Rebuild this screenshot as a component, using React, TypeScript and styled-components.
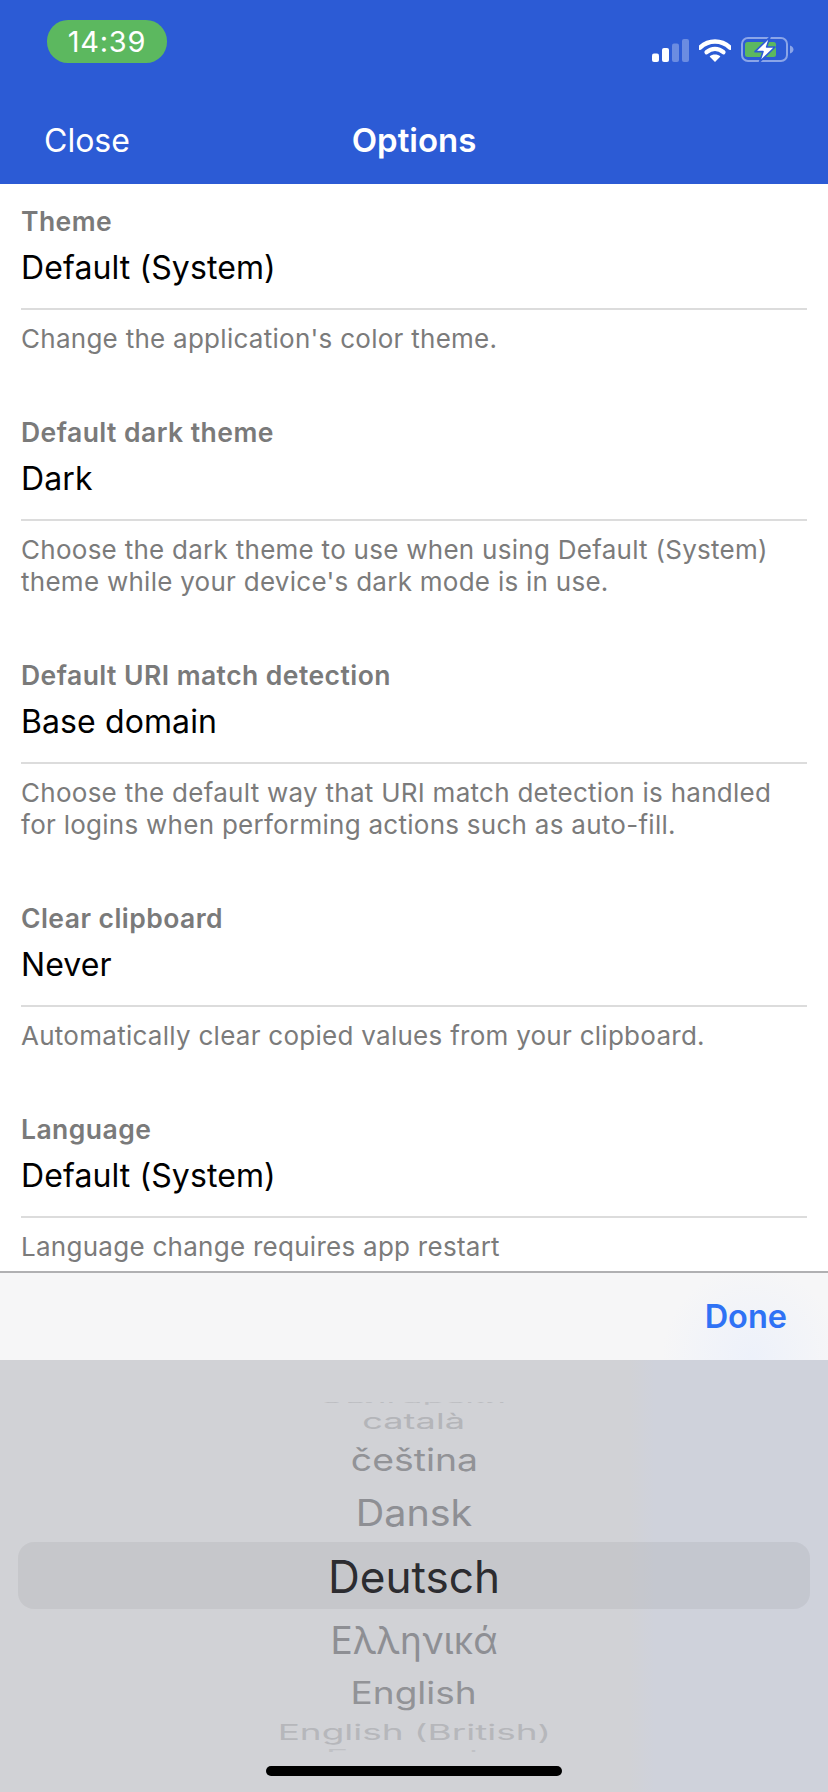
import React from 'react';
import styled, { createGlobalStyle } from 'styled-components';

const Global = createGlobalStyle`
  html, body {
    margin: 0;
    padding: 0;
    background: #fff;
  }
  body {
    font-family: 'Inter', 'Liberation Sans', sans-serif;
    -webkit-font-smoothing: antialiased;
  }
`;

const Screen = styled.div`
  width: 828px;
  height: 1792px;
  display: flex;
  flex-direction: column;
  overflow: hidden;
  background: #fff;
`;

// 상단 헤더
const Header = styled.header`
  flex: none;
  height: 184px;
  background: #2c5bd5;
  color: #fff;
  padding-top: 20px;
  box-sizing: border-box;
`;

const StatusBar = styled.div`
  height: 43px;
  display: flex;
  justify-content: space-between;
  align-items: flex-end;
  padding: 0 34px 0 47px;
`;

const TimePill = styled.div`
  width: 120px;
  height: 43px;
  border-radius: 21px;
  background: #5cb85f;
  display: flex;
  align-items: center;
  justify-content: center;
  font-size: 29px;
  letter-spacing: 0.7px;
  line-height: 43px;
`;

const StatusIcons = styled.div`
  display: flex;
  align-items: flex-end;
  margin-bottom: 1px;
`;

const Nav = styled.div`
  margin-top: 33px;
  height: 88px;
  display: grid;
  grid-template-columns: 1fr auto 1fr;
  align-items: center;
  padding: 0 44px;
`;

const NavButton = styled.span`
  font-size: 32px;
`;

const NavTitle = styled.span`
  font-size: 33px;
  font-weight: 600;
`;

// 옵션 목록
const List = styled.main`
  flex: 1;
  min-height: 0;
  overflow: hidden;
  padding-top: 22px;
`;

const Section = styled.section`
  padding: 0 21px;
  margin-bottom: 62px;
`;

const Label = styled.div`
  font-size: 26.5px;
  letter-spacing: 0.45px;
  line-height: 30px;
  font-weight: 600;
  color: #7a7a7a;
`;

const Value = styled.div`
  margin-top: 12px;
  font-size: 32px;
  letter-spacing: 0.1px;
  line-height: 40px;
  color: #000;
  padding-bottom: 20px;
  border-bottom: 2px solid #dcdcdc;
`;

const Hint = styled.p`
  margin: 13px 0 0;
  font-size: 26px;
  letter-spacing: 0.27px;
  line-height: 32px;
  color: #7b7b7b;
  white-space: pre-line;
`;

// 하단 피커
const Sheet = styled.div`
  flex: none;
  height: 521px;
  display: flex;
  flex-direction: column;
`;

const Toolbar = styled.div`
  flex: none;
  height: 89px;
  box-sizing: border-box;
  border-top: 2px solid #b0b0b2;
  background: radial-gradient(circle at 752px 84px, #edf1fa 0, #f6f6f7 90px);
  display: flex;
  align-items: center;
  justify-content: flex-end;
  padding-right: 41px;
`;

const DoneButton = styled.span`
  font-size: 32.5px;
  font-weight: 600;
  color: #2f72f5;
`;

const Picker = styled.div`
  position: relative;
  flex: 1;
  background: linear-gradient(90deg, #d1d2d6 0%, #d1d2d6 76%, #cfd2db 79%, #cfd2db 100%);
`;

const SelectionBar = styled.div`
  position: absolute;
  left: 18px;
  right: 18px;
  top: 182px;
  height: 67px;
  border-radius: 16px;
  background: rgba(0, 0, 0, 0.05);
`;

const Wheel = styled.div`
  position: absolute;
  left: 0;
  right: 0;
  top: 42px;
  height: 350px;
  overflow: hidden;
`;

const WheelTrack = styled.div`
  margin-top: -10px;
`;

const WheelRow = styled.div<{ $h: number }>`
  height: ${({ $h }) => $h}px;
  display: flex;
  align-items: center;
  justify-content: center;
`;

const WheelText = styled.span<{ $sx: number; $sy: number; $color: string }>`
  font-size: 42px;
  line-height: 50px;
  white-space: nowrap;
  color: ${({ $color }) => $color};
  transform: scale(${({ $sx }) => $sx}, ${({ $sy }) => $sy});
`;

const HomeIndicator = styled.div`
  position: absolute;
  left: 266px;
  top: 406px;
  width: 296px;
  height: 10px;
  border-radius: 5px;
  background: #000;
`;

const SignalIcon = () => (
  <svg width="37" height="23" viewBox="0 0 37 23" style={{ marginRight: 10 }}>
    <rect x="0" y="14.5" width="7" height="8.5" rx="2" fill="#fff" />
    <rect x="10" y="9" width="7" height="14" rx="2" fill="#fff" />
    <rect x="20" y="4.5" width="7" height="18.5" rx="2" fill="#fff" opacity="0.3" />
    <rect x="30" y="0" width="7" height="23" rx="2" fill="#fff" opacity="0.3" />
  </svg>
);

const WifiIcon = () => (
  <svg width="32" height="23" viewBox="0 0 32 23" style={{ marginRight: 10 }}>
    <path d="M1 8.2 C9.5 0 22.5 0 31 8.2" fill="none" stroke="#fff" strokeWidth="4.6" strokeLinecap="round" transform="translate(0 0.4)" />
    <path d="M7.6 13.2 C12.6 8.8 19.4 8.8 24.4 13.2" fill="none" stroke="#fff" strokeWidth="4.4" strokeLinecap="round" />
    <path d="M16 23 L10.6 17.4 C13.6 14.9 18.4 14.9 21.4 17.4 Z" fill="#fff" />
  </svg>
);

const BatteryIcon = () => (
  <svg width="53" height="25" viewBox="0 0 53 25">
    <rect x="1" y="1" width="45" height="23" rx="6" fill="none" stroke="#fff" strokeOpacity="0.45" strokeWidth="2" />
    <rect x="4" y="5" width="31" height="15" rx="2.5" fill="#5cb85f" />
    <path d="M49 8.5 C51.5 9.5 52.5 11 52.5 12.5 C52.5 14 51.5 15.5 49 16.5 Z" fill="#fff" fillOpacity="0.45" />
    <path
      d="M29 0 L14 14.6 L22 14.6 L18.5 25 L34 10 L25.6 10 Z"
      fill="#fff"
      stroke="#2c5bd5"
      strokeWidth="1.6"
      strokeLinejoin="round"
    />
  </svg>
);

const options = [
  {
    label: 'Theme',
    value: 'Default (System)',
    hint: "Change the application's color theme.",
  },
  {
    label: 'Default dark theme',
    value: 'Dark',
    hint: "Choose the dark theme to use when using Default (System)\ntheme while your device's dark mode is in use.",
  },
  {
    label: 'Default URI match detection',
    value: 'Base domain',
    hint: 'Choose the default way that URI match detection is handled\nfor logins when performing actions such as auto-fill.',
  },
  {
    label: 'Clear clipboard',
    value: 'Never',
    hint: 'Automatically clear copied values from your clipboard.',
  },
  {
    label: 'Language',
    value: 'Default (System)',
    hint: 'Language change requires app restart',
  },
];

const languages = [
  { name: 'български', h: 16, sx: 0.86, sy: 0.2, color: '#bcbdc1' },
  { name: 'català', h: 26, sx: 0.86, sy: 0.5, color: '#b4b5b9' },
  { name: 'čeština', h: 52, sx: 0.89, sy: 0.74, color: '#929397' },
  { name: 'Dansk', h: 54, sx: 0.94, sy: 0.88, color: '#8e8f94' },
  { name: 'Deutsch', h: 74, sx: 1.05, sy: 1.06, color: '#2c2c30' },
  { name: 'Ελληνικά', h: 52, sx: 0.88, sy: 0.9, color: '#8e8f94' },
  { name: 'English', h: 54, sx: 0.88, sy: 0.73, color: '#929397' },
  { name: 'English (British)', h: 24, sx: 0.88, sy: 0.5, color: '#b6b7bb' },
  { name: 'Esperanto', h: 22, sx: 0.88, sy: 0.35, color: '#c0c1c5' },
];

export default function App() {
  return (
    <Screen>
      <Global />
      <Header>
        <StatusBar>
          <TimePill>14:39</TimePill>
          <StatusIcons>
            <SignalIcon />
            <WifiIcon />
            <BatteryIcon />
          </StatusIcons>
        </StatusBar>
        <Nav>
          <NavButton>Close</NavButton>
          <NavTitle>Options</NavTitle>
          <span />
        </Nav>
      </Header>

      <List>
        {options.map((o) => (
          <Section key={o.label}>
            <Label>{o.label}</Label>
            <Value>{o.value}</Value>
            <Hint>{o.hint}</Hint>
          </Section>
        ))}
      </List>

      <Sheet>
        <Toolbar>
          <DoneButton>Done</DoneButton>
        </Toolbar>
        <Picker>
          <SelectionBar />
          <Wheel>
            <WheelTrack>
              {languages.map((l) => (
                <WheelRow key={l.name} $h={l.h}>
                  <WheelText $sx={l.sx} $sy={l.sy} $color={l.color}>
                    {l.name}
                  </WheelText>
                </WheelRow>
              ))}
            </WheelTrack>
          </Wheel>
          <HomeIndicator />
        </Picker>
      </Sheet>
    </Screen>
  );
}
